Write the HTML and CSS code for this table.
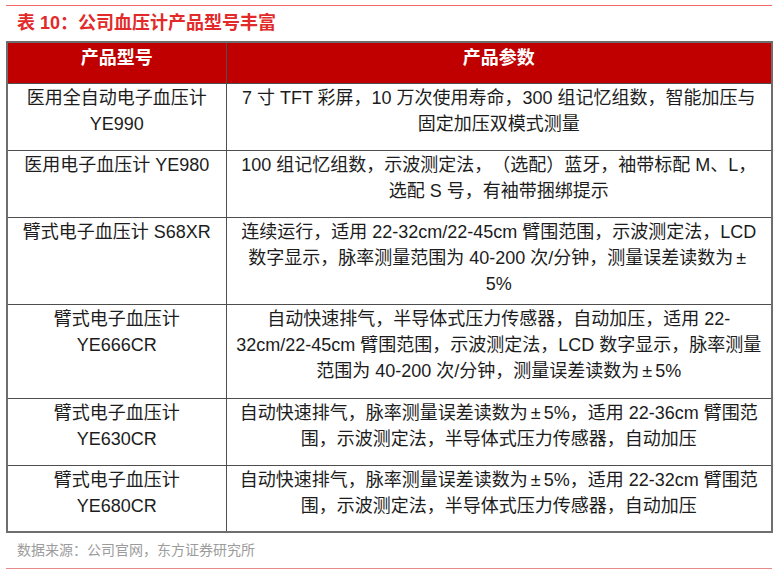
FILE: index.html
```html
<!DOCTYPE html>
<html lang="zh-CN">
<head>
<meta charset="utf-8">
<title>表 10：公司血压计产品型号丰富</title>
<link rel="stylesheet" href="styles.css">
</head>
<body>
<div class="page">
  <div class="rule-top"></div>
  <h1 class="title">表 10：公司血压计产品型号丰富</h1>
  <table class="spec">
    <colgroup><col class="c-model"><col class="c-param"></colgroup>
    <thead>
      <tr class="r-head"><th>产品型号</th><th>产品参数</th></tr>
    </thead>
    <tbody>
      <tr class="r-67">
        <td>医用全自动电子血压计<br>YE990</td>
        <td>7 寸 TFT 彩屏，10 万次使用寿命，300 组记忆组数，智能加压与<br>固定加压双模式测量</td>
      </tr>
      <tr class="r-67">
        <td>医用电子血压计 YE980</td>
        <td>100 组记忆组数，示波测定法，（选配）蓝牙，袖带标配 M、L，<br>选配 S 号，有袖带捆绑提示</td>
      </tr>
      <tr class="r-87">
        <td>臂式电子血压计 S68XR</td>
        <td>连续运行，适用 22-32cm/22-45cm 臂围范围，示波测定法，LCD<br>数字显示，脉率测量范围为 40-200 次/分钟，测量误差读数为<span class="pm">±</span><br>5%</td>
      </tr>
      <tr class="r-94">
        <td>臂式电子血压计<br>YE666CR</td>
        <td>自动快速排气，半导体式压力传感器，自动加压，适用 22-<br>32cm/22-45cm 臂围范围，示波测定法，LCD 数字显示，脉率测量<br>范围为 40-200 次/分钟，测量误差读数为<span class="pm">±</span>5%</td>
      </tr>
      <tr class="r-67">
        <td>臂式电子血压计<br>YE630CR</td>
        <td>自动快速排气，脉率测量误差读数为<span class="pm">±</span>5%，适用 22-36cm 臂围范<br>围，示波测定法，半导体式压力传感器，自动加压</td>
      </tr>
      <tr class="r-67">
        <td>臂式电子血压计<br>YE680CR</td>
        <td>自动快速排气，脉率测量误差读数为<span class="pm">±</span>5%，适用 22-32cm 臂围范<br>围，示波测定法，半导体式压力传感器，自动加压</td>
      </tr>
    </tbody>
  </table>
  <p class="source">数据来源：公司官网，东方证券研究所</p>
  <div class="rule-bottom"></div>
</div>
</body>
</html>
```

FILE: styles.css
```css
* { box-sizing: border-box; }

html, body {
  margin: 0;
  padding: 0;
  background: #ffffff;
}

body {
  font-family: "Liberation Sans", "Noto Sans CJK SC", sans-serif;
  color: #1c1c1c;
  text-spacing-trim: space-all;
}

.page {
  width: 778px;
  padding: 5px 6px 0 6px;
}

.rule-top {
  border-top: 1px solid #f06868;
}

.title {
  margin: 5px 0 0 11px;
  font-size: 18px;
  line-height: 24px;
  font-weight: bold;
  color: #e22a2a;
}

.spec {
  margin: 6px 0 0 0;
  width: 765px;
  border-collapse: collapse;
  table-layout: fixed;
  border: 2px solid #6e6e6e;
  font-size: 18px;
  line-height: 26px;
}

.c-model { width: 219px; }
.c-param { width: 546px; }

.spec th,
.spec td {
  border: 1px solid #4e4e4e;
  text-align: center;
  vertical-align: top;
  white-space: nowrap;
  padding: 1px 4px 0 4px;
}

.spec th {
  background: #c00000;
  color: #ffffff;
  font-weight: bold;
  padding-top: 2px;
}

.r-head { height: 41px; }
.r-67 { height: 67px; }
.r-87 { height: 87px; }
.r-94 { height: 94px; }

.pm {
  padding: 0 3px;
}

.source {
  margin: 7px 0 0 11px;
  font-size: 14px;
  line-height: 20px;
  color: #9c9c9c;
}

.rule-bottom {
  margin-top: 8px;
  border-top: 1px solid #e88a8a;
}
```
